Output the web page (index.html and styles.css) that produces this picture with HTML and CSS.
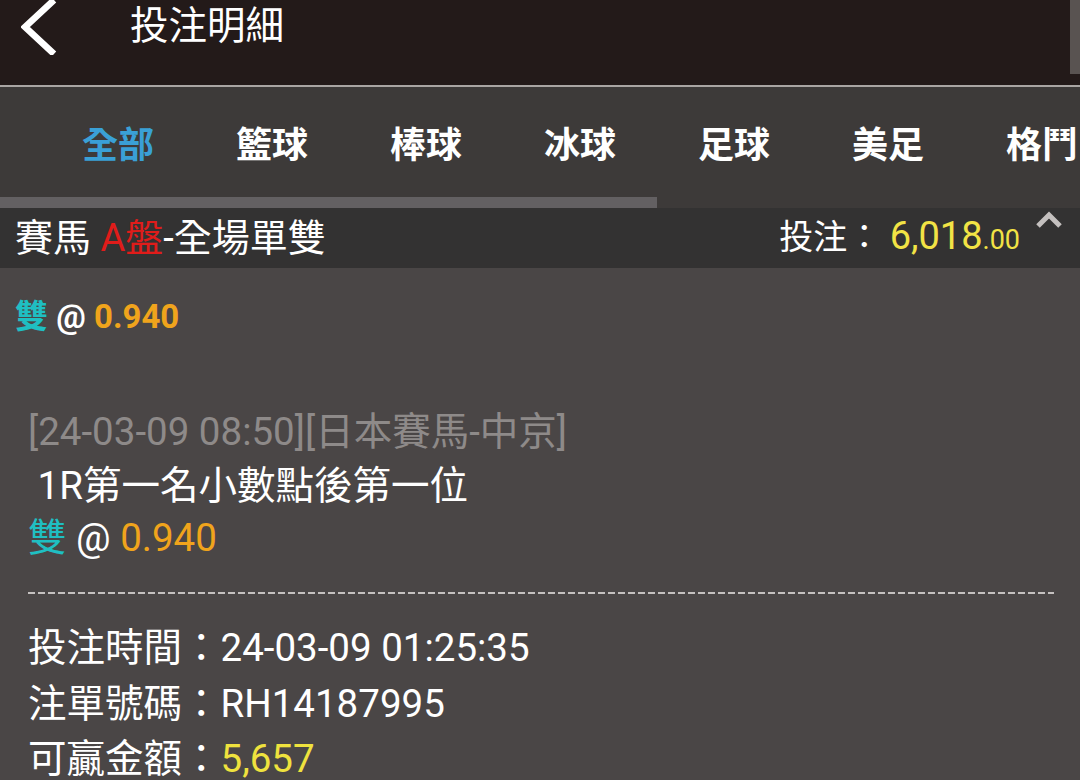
FILE: index.html
```html
<!DOCTYPE html>
<html lang="zh-Hant">
<head>
  <meta charset="UTF-8">
  <title>投注明細</title>
  <meta name="viewport" content="width=device-width, initial-scale=1.0" />
  <link rel="stylesheet" href="styles.css">
</head>
<body>
  <div class="topbar">
    <svg class="back" width="40" height="56" viewBox="0 0 40 56">
      <polyline points="33,1 4,28 33,55" fill="none" stroke="#fff" stroke-width="6.5" />
    </svg>
    <h1 class="title">投注明細</h1>
    <div class="scrollthumb"></div>
  </div>

  <div class="tabs">
    <div class="tab active">全部</div>
    <div class="tab">籃球</div>
    <div class="tab">棒球</div>
    <div class="tab">冰球</div>
    <div class="tab">足球</div>
    <div class="tab">美足</div>
    <div class="tab">格鬥</div>
  </div>
  <div class="tab-track"><div class="tab-thumb"></div></div>

  <div class="section-head">
    <div class="section-title">賽馬 <span class="red">A盤</span>-全場單雙</div>
    <div class="section-total">
      投注： <span class="amount">6,018<small>.00</small></span>
    </div>
    <svg class="collapse" width="28" height="18" viewBox="0 0 28 18">
      <polyline points="3,15 14,4 25,15" fill="none" stroke="#c4c0bf" stroke-width="5" />
    </svg>
  </div>

  <div class="summary">
    <span class="teal">雙</span> @ <span class="orange">0.940</span>
  </div>

  <div class="detail">
    <div class="event">[24-03-09 08:50][日本賽馬-中京]</div>
    <div class="line">&nbsp;1R第一名小數點後第一位</div>
    <div class="line pick"><span class="teal">雙</span> @ <span class="orange">0.940</span></div>
    <div class="dash"></div>
    <div class="info">投注時間：24-03-09 01:25:35</div>
    <div class="info">注單號碼：RH14187995</div>
    <div class="info">可贏金額：<span class="yellow">5,657</span></div>
  </div>
</body>
</html>
```

FILE: styles.css
```css
body {
  margin: 0;
  width: 1080px;
  height: 780px;
  overflow: hidden;
  background: #4a4646;
  color: #fff;
  font-family: Roboto, "Noto Sans CJK TC", sans-serif;
}

.topbar {
  position: relative;
  height: 85px;
  background: #231a19;
  border-bottom: 2px solid #a9a5a3;
  display: flex;
  align-items: flex-start;
}

.back {
  display: block;
  margin: -1px 0 0 21px;
}

.title {
  margin: 0 0 0 69px;
  font-size: 38.5px;
  font-weight: 400;
  line-height: 52px;
}

.scrollthumb {
  position: absolute;
  right: 0;
  top: 0;
  width: 10px;
  height: 74px;
  background: #595351;
}

.tabs {
  height: 110px;
  background: #3d3a39;
  display: flex;
  padding-left: 41px;
  overflow: hidden;
}

.tab {
  flex: 0 0 154px;
  text-align: center;
  font-size: 36px;
  font-weight: 700;
  line-height: 118px;
}

.tab.active {
  color: #3aa0d6;
}

.tab-track {
  height: 11px;
  background: #3d3a39;
}

.tab-thumb {
  width: 657px;
  height: 100%;
  background: #636062;
}

.section-head {
  height: 60px;
  background: #333232;
  display: flex;
  align-items: center;
  padding: 0 17px 0 15px;
}

.section-title {
  font-size: 38px;
  line-height: 56px;
  flex: 1;
}

.red {
  color: #e01c1a;
}

.section-total {
  font-size: 34px;
  line-height: 56px;
}

.amount {
  color: #f2e345;
  font-size: 38px;
}

.amount small {
  font-size: 27px;
}

.collapse {
  align-self: flex-start;
  margin: 3px 0 0 15px;
}

.summary {
  margin: 29px 0 0 15px;
  font-size: 33px;
  font-weight: 700;
  line-height: 40px;
}

.teal {
  color: #1fbfc2;
}

.orange {
  color: #f0a41c;
}

.yellow {
  color: #efe23e;
}

.detail {
  padding: 0 26px 0 28px;
  margin-top: 67px;
}

.event {
  color: #8e8a89;
  font-size: 38.5px;
  line-height: 56px;
}

.line {
  font-size: 38.5px;
  line-height: 52px;
}

.dash {
  height: 2px;
  margin: 28px 0 26px;
  background: repeating-linear-gradient(to right, #c5c1c0 0 7px, transparent 7px 10px);
}

.info {
  font-size: 38.5px;
  line-height: 55.5px;
}
```
